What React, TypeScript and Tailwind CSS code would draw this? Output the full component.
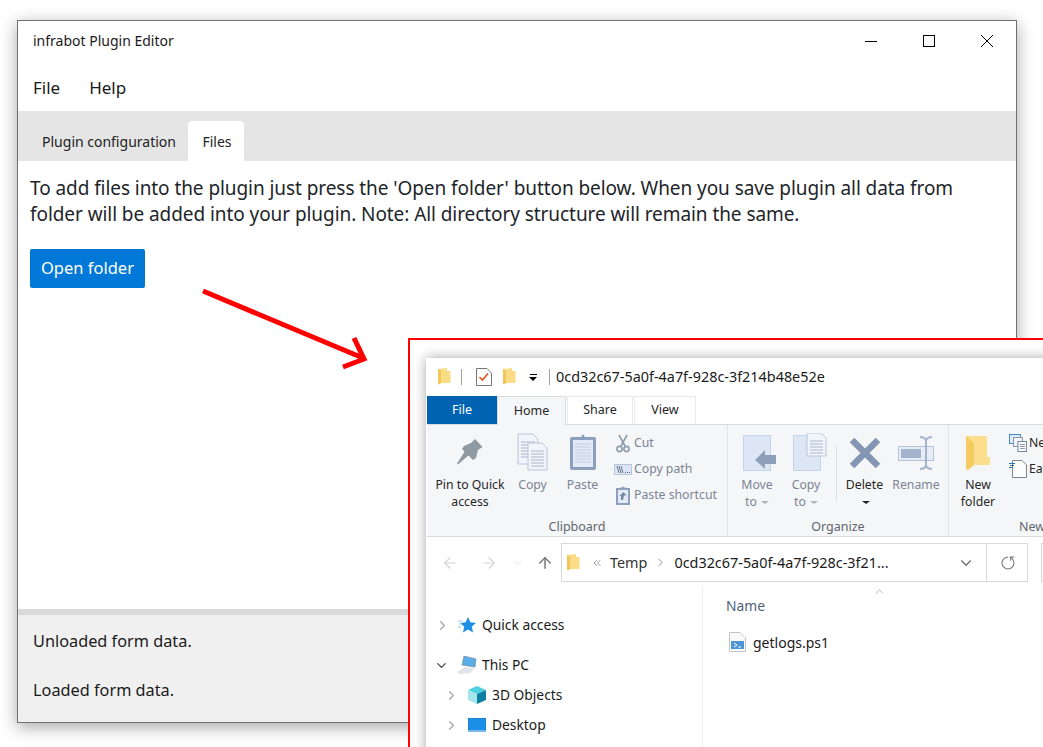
import React from 'react';
import { ArrowLeft, ArrowRight, ArrowUp, ChevronDown, ChevronRight, ChevronUp, ChevronsLeft, RotateCw } from 'lucide-react';

const FolderSmall = ({ className = '' }: { className?: string }) => (
    <svg viewBox="0 0 13 18" width="13" height="18" className={className}>
        <path d="M0 1 L9 0 L9 3 L12.5 3 L12.5 15 L3 15 L1 16.5 L0 15.5 Z" fill="#fbdc86" />
        <path d="M0 1 L3 2.5 L3 15 L1 16.5 L0 15.5 Z" fill="#f2c65a" />
    </svg>
);

const PinIcon = () => (
    <svg viewBox="0 0 26 26" width="26" height="26">
        <path d="M18 0 L25.5 8 L21 11 L19 19 L16 21 L5 10 L7 7 L14 4 Z" fill="#8f9aa3" />
        <path d="M8 12 L12 16 L1 25.5 L0 24.5 Z" fill="#8f9aa3" />
    </svg>
);

const PageLines = ({ x, y, w, h }: { x: number; y: number; w: number; h: number }) => (
    <g>
        <path d={`M${x} ${y} H${x + w - 5} L${x + w} ${y + 5} V${y + h} H${x} Z`} fill="#f1f5fb" stroke="#b9c5d8" />
        {[8, 11, 14, 17, 20, 23].map((d) => (
            d < h - 2 && <line key={d} x1={x + 3} x2={x + w - 3} y1={y + d} y2={y + d} stroke="#a9b6cc" />
        ))}
    </g>
);

const CopyIcon = () => (
    <svg viewBox="0 0 32 38" width="32" height="38">
        <PageLines x={1} y={1} w={20} h={30} />
        <PageLines x={11} y={10} w={19} h={27} />
    </svg>
);

const PasteIcon = () => (
    <svg viewBox="0 0 28 38" width="28" height="38">
        <rect x="1" y="4" width="26" height="33" rx="2" fill="#8d9fbd" />
        <rect x="4" y="7" width="20" height="27" fill="#e3e9f5" />
        {[11, 14, 17, 20, 23, 26, 29].map((d) => (
            <line key={d} x1="6" x2="22" y1={d} y2={d} stroke="#c3cfe3" />
        ))}
        <path d="M9 7 V4 H12 L14 1 L16 4 H19 V7 Z" fill="#8d9fbd" />
    </svg>
);

const ScissorsIcon = () => (
    <svg viewBox="0 0 14 19" width="14" height="19" fill="none" stroke="#8f9cae" strokeWidth="1.6">
        <path d="M3 1 L9 12 M11 1 L5 12" />
        <circle cx="3.5" cy="15" r="2.6" />
        <circle cx="10.5" cy="15" r="2.6" />
    </svg>
);

const CopyPathIcon = () => (
    <svg viewBox="0 0 18 11" width="18" height="11">
        <rect x="0.5" y="0.5" width="17" height="10" fill="#dde6f3" stroke="#b7c6dc" />
        <path d="M3 2 L5 9 M5 2 L7 9 M7 2 L9 9" stroke="#5b6b82" strokeWidth="0.9" />
        <path d="M11 8.5 H12 M13 8.5 H14 M15 8.5 H16" stroke="#5b6b82" />
    </svg>
);

const PasteShortcutIcon = () => (
    <svg viewBox="0 0 14 19" width="14" height="19">
        <rect x="0" y="2" width="14" height="17" fill="#8d9fbd" />
        <rect x="2" y="4" width="10" height="13" fill="#e3e9f5" />
        <path d="M4 1.5 H6 L7 0 L8 1.5 H10 V3 H4 Z" fill="#8d9fbd" />
        <path d="M5 14 V10 L3.5 10 L7.5 6 L10.5 9.5 H8 L7 14 Z" fill="#7588a8" />
    </svg>
);

const MoveToIcon = () => (
    <svg viewBox="0 0 34 36" width="34" height="36" className="ml-[5px]">
        <rect x="0.5" y="0.5" width="27" height="35" fill="#dce6f4" stroke="#c6d4e8" />
        <path d="M12 27 L22 17 V22 H33 V31 H22 V36 Z" fill="#8fa0ba" transform="translate(0 -2)" />
    </svg>
);

const CopyToIcon = () => (
    <svg viewBox="0 0 34 38" width="34" height="38" className="ml-[8px]">
        <rect x="0.5" y="2.5" width="27" height="35" fill="#dce6f4" stroke="#c6d4e8" />
        <PageLines x={14} y={0} w={19} h={23} />
    </svg>
);

const DeleteIcon = () => (
    <svg viewBox="0 0 32 32" width="32" height="32">
        <path d="M3 3 L29 29 M29 3 L3 29" stroke="#8496b3" strokeWidth="6.5" />
    </svg>
);

const RenameIcon = () => (
    <svg viewBox="0 0 36 34" width="36" height="34" fill="none">
        <rect x="0.5" y="10.5" width="35" height="14" fill="#e6edf7" stroke="#b4c3da" />
        <rect x="3" y="13" width="20" height="9" fill="#a3b3cc" />
        <path d="M22 1 C25 1 27 2 28 4 C29 2 31 1 34 1 M28 4 V30 M22 33 C25 33 27 32 28 30 C29 32 31 33 34 33" stroke="#a3b3cc" strokeWidth="2" />
    </svg>
);

const NewFolderIcon = () => (
    <svg viewBox="0 0 24 36" width="24" height="36">
        <path d="M0 1 H21 V22 H24 V30 H8 L2 35 L0 34 Z" fill="#fcdf8d" />
        <path d="M0 1 L8 8 V30 L2 35 L0 34 Z" fill="#f4cc63" />
    </svg>
);

const NewItemIcon = () => (
    <svg viewBox="0 0 18 18" width="18" height="18">
        <rect x="0.5" y="0.5" width="11" height="9" fill="#dfeaf7" stroke="#3d8cc9" />
        <rect x="4.5" y="3.5" width="9" height="9" fill="#f2f5f9" stroke="#8b98a8" />
        <rect x="9" y="7.5" width="8.5" height="10" fill="#fff" stroke="#75879e" />
        <path d="M11 10.5 H16 M11 12.5 H16 M11 14.5 H16" stroke="#8a9bb3" />
    </svg>
);

const EasyAccessIcon = () => (
    <svg viewBox="0 0 18 18" width="18" height="18">
        <path d="M3.5 0.5 H13 L17.5 5 V17.5 H3.5 Z" fill="#fff" stroke="#7d8794" />
        <path d="M0 3.5 H6 M1 5.5 H5 M0 7.5 H3" stroke="#2a74b8" />
    </svg>
);

const QuickAccessIcon = () => (
    <svg viewBox="0 0 18 16" width="18" height="16">
        <path d="M10 0 L12.4 5.3 L18 5.9 L13.8 9.6 L15 15.5 L10 12.5 L5 15.5 L6.2 9.6 L2 5.9 L7.6 5.3 Z" fill="#1f8fe3" />
        <path d="M0 4 H4 M1 7 H4 M0 10 H3" stroke="#9cc8ea" />
    </svg>
);

const ThisPcIcon = () => (
    <svg viewBox="0 0 20 18" width="20" height="18">
        <path d="M7 0 L19 3 L18 11 L5 9 Z" fill="#5aaee8" stroke="#6b7f92" strokeWidth="0.6" />
        <path d="M0 16 L8 11 L18 12 L13 17 L3 18 Z" fill="#dfe4ea" />
    </svg>
);

const ObjectsIcon = () => (
    <svg viewBox="0 0 18 18" width="18" height="18">
        <path d="M9 0 L18 4 L9 8 L0 4 Z" fill="#4fd0e0" />
        <path d="M0 4 L9 8 V18 L0 14 Z" fill="#a5e6ec" />
        <path d="M18 4 L9 8 V18 L18 14 Z" fill="#0e7fa3" />
    </svg>
);

const DesktopIcon = () => (
    <svg viewBox="0 0 18 14" width="18" height="14">
        <rect x="0" y="0" width="18" height="13" fill="#1e8fe6" stroke="#0f5f9e" strokeWidth="0.5" />
        <rect x="0" y="12" width="18" height="2" fill="#7bb7e6" />
    </svg>
);

const ScriptFileIcon = () => (
    <svg viewBox="0 0 18 20" width="18" height="20">
        <path d="M1.5 0.5 H12 L17.5 6 V19.5 H1.5 Z" fill="#fafafa" stroke="#c2c6cb" />
        <rect x="3" y="9" width="13" height="8" fill="#4f94d4" />
        <path d="M6 11 L9 13 L6 15 M10 15 H13" stroke="#fff" fill="none" />
    </svg>
);

const BigButton = ({ width, label, icon, dark }: { width: string; label: React.ReactNode; icon: React.ReactNode; dark?: boolean }) => (
    <div className={`${width} flex flex-col items-center`}>
        <div className="h-[40px] flex items-end justify-center">{icon}</div>
        <div className={`mt-[5px] text-[12.25px] leading-[17px] text-center whitespace-nowrap ${dark ? 'text-[#262626]' : 'text-[#7b8494]'}`}>{label}</div>
    </div>
);

const SmallButton = ({ icon, label, dark }: { icon: React.ReactNode; label: string; dark?: boolean }) => (
    <div className="h-[26px] flex items-center whitespace-nowrap">
        <div className="w-[22px] flex justify-center shrink-0">{icon}</div>
        <span className={`text-[12.25px] ${dark ? 'text-[#262626]' : 'text-[#7b8494]'}`}>{label}</span>
    </div>
);

const Caret = ({ color }: { color: string }) => (
    <span className={`inline-block ml-1 align-middle w-0 h-0 border-x-[4px] border-x-transparent border-t-[3px] ${color}`} />
);

const TreeRow = ({ indent, icon, label, open, gap }: { indent: string; icon: React.ReactNode; label: string; open?: boolean; gap: string }) => (
    <div className={`flex items-center h-[30px] ${indent}`}>
        {open ? <ChevronDown size={15} strokeWidth={2} className="text-[#444]" /> : <ChevronRight size={15} strokeWidth={2} className="text-[#a6a6a6]" />}
        <div className={`w-[22px] flex justify-center ${gap}`}>{icon}</div>
        <span className="text-[13.8px] text-[#1a1a1a] ml-[4px] whitespace-nowrap">{label}</span>
    </div>
);

const ExplorerWindow = () => (
    <div className="w-[720px] bg-white shadow-[0_0_12px_rgba(0,0,0,0.35)] pl-px">
        {/* Title bar */}
        <div className="h-[38px] flex items-center pl-[11px]">
            <FolderSmall />
            <div className="w-px h-[16px] bg-[#a0a0a0] ml-[10px]" />
            <svg viewBox="0 0 16 18" width="16" height="18" className="ml-[14px]">
                <path d="M0.5 0.5 H11 L15.5 5 V17.5 H0.5 Z" fill="#fff" stroke="#777" />
                <path d="M3.5 9 L6.5 12 L12 5.5" stroke="#e0531f" strokeWidth="1.6" fill="none" />
            </svg>
            <FolderSmall className="ml-[11px]" />
            <div className="ml-[13px] flex flex-col items-center gap-[2px]">
                <div className="w-[7px] h-px bg-black" />
                <div className="w-0 h-0 border-x-[4px] border-x-transparent border-t-[4px] border-t-black" />
            </div>
            <div className="w-px h-[16px] bg-[#a0a0a0] ml-[12px]" />
            <span className="ml-[6px] text-[14.4px] text-[#1a1a1a] whitespace-nowrap">0cd32c67-5a0f-4a7f-928c-3f214b48e52e</span>
        </div>

        {/* Ribbon tabs */}
        <div className="h-[29px] flex items-stretch text-[12.5px] border-b border-[#dadbdc]">
            <div className="w-[70px] h-[28px] bg-[#0063b1] text-white flex items-center justify-center">File</div>
            <div className="w-[69px] h-[29px] bg-[#f5f6f7] border-x border-t border-[#dadbdc] text-[#262626] flex items-center justify-center">Home</div>
            <div className="w-[66px] ml-px border-x border-t border-[#e8e9ea] text-[#262626] flex items-center justify-center">Share</div>
            <div className="w-[62px] ml-[1px] border-x border-t border-[#e8e9ea] text-[#262626] flex items-center justify-center">View</div>
        </div>

        {/* Ribbon body */}
        <div className="h-[112px] bg-[#f5f6f7] border-b border-[#dadbdc] flex">
            <div className="w-[301px] flex flex-col border-r border-[#e2e3e4]">
                <div className="flex-1 flex pt-[6px] pl-[8px]">
                    <BigButton width="w-[70px]" icon={<div className="mb-[6px]"><PinIcon /></div>} label={<>Pin to Quick<br />access</>} dark />
                    <BigButton width="w-[55px]" icon={<CopyIcon />} label="Copy" />
                    <BigButton width="w-[45px]" icon={<PasteIcon />} label="Paste" />
                    <div className="ml-[7px] flex flex-col -mt-px">
                        <SmallButton icon={<ScissorsIcon />} label="Cut" />
                        <SmallButton icon={<CopyPathIcon />} label="Copy path" />
                        <SmallButton icon={<PasteShortcutIcon />} label="Paste shortcut" />
                    </div>
                </div>
                <div className="h-[26px] pt-[8px] flex items-center justify-center text-[12.5px] text-[#5f6670]">Clipboard</div>
            </div>
            <div className="w-[221px] flex flex-col border-r border-[#e2e3e4]">
                <div className="flex-1 flex pt-[6px]">
                    <BigButton width="w-[58px]" icon={<MoveToIcon />} label={<>Move<br />to<Caret color="border-t-[#b0b4ba]" /></>} />
                    <BigButton width="w-[40px]" icon={<CopyToIcon />} label={<>Copy<br />to<Caret color="border-t-[#b0b4ba]" /></>} />
                    <div className="w-px h-[55px] bg-[#dcdddf] mt-[15px] ml-[10px]" />
                    <BigButton width="w-[55px]" icon={<div className="mb-[2px]"><DeleteIcon /></div>} label={<>Delete<br /><Caret color="border-t-[#222]" /></>} dark />
                    <BigButton width="w-[48px]" icon={<div className="mb-[1px]"><RenameIcon /></div>} label="Rename" />
                </div>
                <div className="h-[26px] pt-[8px] flex items-center justify-center text-[12.5px] text-[#5f6670]">Organize</div>
            </div>
            <div className="w-[166px] flex flex-col">
                <div className="flex-1 flex pt-[6px]">
                    <BigButton width="w-[58px]" icon={<NewFolderIcon />} label={<>New<br />folder</>} dark />
                    <div className="flex flex-col -mt-px">
                        <SmallButton icon={<NewItemIcon />} label="New item" dark />
                        <SmallButton icon={<EasyAccessIcon />} label="Easy access" dark />
                    </div>
                </div>
                <div className="h-[26px] pt-[8px] flex items-center justify-center text-[12.5px] text-[#5f6670]">New</div>
            </div>
        </div>

        {/* Address bar */}
        <div className="flex items-center mt-[6px] h-[39px]">
            <div className="w-[134px] flex items-center">
                <ArrowLeft size={18} strokeWidth={1.5} className="ml-[14px] text-[#d4d4d4]" />
                <ArrowRight size={18} strokeWidth={1.5} className="ml-[21px] text-[#d4d4d4]" />
                <ChevronDown size={12} strokeWidth={1.5} className="ml-[14px] text-[#d4d4d4]" />
                <ArrowUp size={18} strokeWidth={2} className="ml-[12px] text-[#7a7a7a]" />
            </div>
            <div className="w-[467px] h-[39px] border border-[#d9d9d9] flex items-center">
                <FolderSmall className="ml-[5px]" />
                <ChevronsLeft size={12} strokeWidth={1.5} className="ml-[11px] text-[#777]" />
                <span className="ml-[7px] text-[14.4px] text-[#333]">Temp</span>
                <ChevronRight size={13} strokeWidth={1.5} className="ml-[7px] text-[#777]" />
                <span className="ml-[7px] text-[14.4px] text-[#1a1a1a] w-[226px] whitespace-nowrap">0cd32c67-5a0f-4a7f-928c-3f21...</span>
                <ChevronDown size={18} strokeWidth={1.5} className="ml-[57px] text-[#666]" />
                <div className="w-px h-[37px] bg-[#d9d9d9] ml-[11px]" />
                <RotateCw size={16} strokeWidth={1.6} className="ml-[13px] text-[#777] -scale-x-100 rotate-90" />
            </div>
            <div className="w-[60px] h-[39px] border border-[#d9d9d9] ml-[13px]" />
        </div>

        {/* Tree and list */}
        <div className="flex h-[170px] mt-[4px]">
            <div className="w-[276px] border-r border-[#eeeeee] pt-[24px]">
                <TreeRow indent="pl-[8px]" icon={<QuickAccessIcon />} label="Quick access" gap="ml-[6px]" />
                <div className="h-[10px]" />
                <TreeRow indent="pl-[7px]" open icon={<ThisPcIcon />} label="This PC" gap="ml-[7px]" />
                <TreeRow indent="pl-[17px]" icon={<ObjectsIcon />} label="3D Objects" gap="ml-[7px]" />
                <TreeRow indent="pl-[17px]" icon={<DesktopIcon />} label="Desktop" gap="ml-[7px]" />
            </div>
            <div className="flex-1 pl-[23px]">
                <div className="flex justify-center w-[310px] h-[13px]">
                    <ChevronUp size={13} strokeWidth={1} className="text-[#777] -mt-px ml-[-3px]" />
                </div>
                <div className="text-[13.8px] text-[#4c607a] -mt-[3px]">Name</div>
                <div className="flex items-center mt-[15px] ml-[2px]">
                    <ScriptFileIcon />
                    <span className="ml-[7px] text-[14px] text-[#1a1a1a]">getlogs.ps1</span>
                </div>
            </div>
        </div>
    </div>
);

export default function App() {
    return (
        <div className="relative w-[1043px] h-[747px] overflow-hidden bg-white font-['Noto_Sans',sans-serif]">
            {/* Plugin editor window */}
            <div className="absolute left-[17px] top-[20px] w-[1000px] h-[703px] border border-[#707070] bg-white flex flex-col shadow-[0_4px_16px_rgba(0,0,0,0.35)]">
                <div className="h-[40px] flex items-center justify-between shrink-0">
                    <span className="ml-[15px] mb-[2px] text-[14px] text-[#1a1a1a]">infrabot Plugin Editor</span>
                    <div className="flex items-center">
                        <div className="w-[12px] h-px bg-black mr-[46px]" />
                        <div className="w-[12px] h-[12px] border border-black mr-[46px]" />
                        <svg viewBox="0 0 12 12" width="12" height="12" className="mr-[23px]" stroke="#000" strokeWidth="1">
                            <path d="M0 0 L12 12 M12 0 L0 12" />
                        </svg>
                    </div>
                </div>
                <div className="h-[50px] flex items-center gap-[29px] pl-[15px] pt-[4px] text-[17px] text-[#1a1a1a] shrink-0">
                    <span>File</span>
                    <span>Help</span>
                </div>
                <div className="h-[50px] bg-[#e5e5e5] flex items-end pl-[12px] shrink-0 text-[14px] text-[#222]">
                    <div className="h-[40px] w-[158px] flex items-center justify-center">Plugin configuration</div>
                    <div className="h-[40px] w-[56px] pl-[2px] bg-white rounded-t-[4px] flex items-center justify-center">Files</div>
                </div>
                <div className="flex-1 px-[12px] pt-[14px]">
                    <p className="text-[19px] leading-[26px] tracking-[-0.07px] text-[#212529]">
                        To add files into the plugin just press the 'Open folder' button below. When you save plugin all data from<br />
                        folder will be added into your plugin. Note: All directory structure will remain the same.
                    </p>
                    <button className="mt-[22px] w-[115px] h-[39px] bg-[#0078d7] rounded-[2px] text-white text-[16.5px]">Open folder</button>
                </div>
                <div className="h-[6px] bg-[#d9d9d9] shrink-0" />
                <div className="h-[107px] bg-[#f0f0f0] shrink-0 pl-[15px] text-[16.3px] text-[#1a1a1a] pt-[14px]">
                    <div className="h-[25px] leading-[25px]">Unloaded form data.</div>
                    <div className="h-[25px] leading-[25px] mt-[24px]">Loaded form data.</div>
                </div>
            </div>

            {/* Red arrow annotation */}
            <svg className="absolute left-[195px] top-[280px]" width="180" height="95" viewBox="195 280 180 95" fill="none" stroke="#ff0000" strokeWidth="5">
                <path d="M203 291 L363 358" />
                <path d="M354 338 L364 359 L343 367" />
            </svg>

            {/* Explorer screenshot inset */}
            <div className="absolute left-[408px] top-[338px] w-[700px] h-[480px] border-2 border-[#ff0000] bg-white pl-[16px] pt-[18px]">
                <ExplorerWindow />
            </div>
        </div>
    );
}
